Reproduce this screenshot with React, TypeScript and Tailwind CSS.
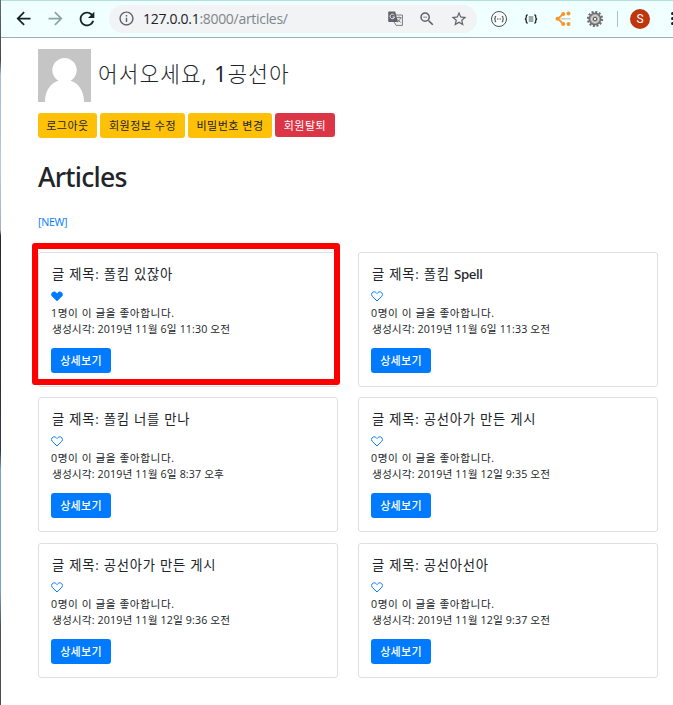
import React from "react";
import { MdArrowBack, MdArrowForward, MdRefresh, MdInfoOutline, MdStarBorder, MdZoomOut } from "react-icons/md";

type Article = { title: string; latin?: string; likes: number; created: string };

const articles: Article[] = [
  { title: "폴킴 있잖아", likes: 1, created: "2019년 11월 6일 11:30 오전" },
  { title: "폴킴 ", latin: "Spell", likes: 0, created: "2019년 11월 6일 11:33 오전" },
  { title: "폴킴 너를 만나", likes: 0, created: "2019년 11월 6일 8:37 오후" },
  { title: "공선아가 만든 게시", likes: 0, created: "2019년 11월 12일 9:35 오전" },
  { title: "공선아가 만든 게시", likes: 0, created: "2019년 11월 12일 9:36 오전" },
  { title: "공선아선아", likes: 0, created: "2019년 11월 12일 9:37 오전" },
];

function TranslateIcon() {
  return (
    <svg width="15" height="15" viewBox="0 0 15 15">
      <path d="M6 4h8.4v10.4H8.2L6 11z" fill="#f1f3f4" stroke="#6b6e72" strokeWidth="0.9" />
      <path d="M8.5 6.6h5M11 5.5v1.1M12.6 6.8c-.6 2-1.8 3.3-3.2 4.3M9.5 8.3c.8 1.4 1.8 2.3 3.2 3" fill="none" stroke="#6b6e72" strokeWidth="0.9" />
      <path d="M1 0.5h6.2L10 11H1a.8.8 0 0 1-.8-.8V1.300A.8.8 0 0 1 1 .5z" fill="#5f6368" />
      <path d="M6.300 4.200A2.300 2.300 0 1 0 6.600 6H4.600" fill="none" stroke="#f1f3f4" strokeWidth="1" />
    </svg>
  );
}

function CircleBracesIcon() {
  return (
    <svg width="18" height="18" viewBox="0 0 18 18" fill="none" stroke="#4a5052">
      <circle cx="9" cy="9" r="7.500" fill="#fafefe" strokeWidth="1" />
      <path d="M6.200 6.200c-1.200 0-1 .6-1 1.500s-.2 1.200-.9 1.300c.7.1.9.5.9 1.300s-.2 1.500 1 1.500M11.800 6.200c1.200 0 1 .6 1 1.500s.2 1.200.9 1.300c-.7.1-.9.5-.9 1.300s.2 1.500-1 1.500" strokeWidth="1.100" />
      <path d="M7 9h4" strokeWidth="1" strokeDasharray="1 .5" />
    </svg>
  );
}

function BracesIcon() {
  return (
    <svg width="14" height="10" viewBox="0 0 14 10" fill="none" stroke="#202829">
      <path d="M3.700 1C2.200 1 2.300 1.700 2.300 3S2 4.800 1 5c1 .2 1.300.7 1.300 2s-.1 2 1.400 2M10.300 1c1.500 0 1.400.7 1.400 2s.3 1.800 1.300 2c-1 .2-1.300.7-1.300 2s.1 2-1.400 2" strokeWidth="1.300" />
      <path d="M4.700 3h4.600M4.700 5h4.600M4.700 7h4.600" strokeWidth="0.8" />
    </svg>
  );
}

function NodesIcon() {
  return (
    <svg width="17" height="16" viewBox="0 0 17 16">
      <path d="M7.500 3.500 3 7.700l4.500 4.700" fill="none" stroke="#fb9427" strokeWidth="1.800" />
      <g fill="#fb9427">
        <circle cx="2.500" cy="7.700" r="2" />
        <circle cx="8.200" cy="3" r="2" />
        <circle cx="8.200" cy="13" r="2" />
        <circle cx="13.500" cy="2.500" r="2" />
        <circle cx="13.500" cy="13" r="2" />
      </g>
      <path d="M5.500 7.800h10" stroke="#c7c4b5" strokeWidth="1.200" />
    </svg>
  );
}

function GearIcon() {
  return (
    <svg width="18" height="18" viewBox="0 0 18 18" fill="none">
      <circle cx="9" cy="9" r="7.100" stroke="#70706f" strokeWidth="2" strokeDasharray="2.100 1.617" />
      <circle cx="9" cy="9" r="5.700" fill="#a9a9a8" stroke="#6d6d6d" strokeWidth="1.500" />
      <circle cx="9" cy="9" r="3.500" stroke="#dedede" strokeWidth="1" />
      <circle cx="9" cy="9" r="1.700" fill="#eee" stroke="#5c5c5c" strokeWidth="1" />
    </svg>
  );
}

function BrowserBar() {
  return (
    <header className="flex h-[38px] items-center border-b border-[#9faeac] bg-[#f0ffff] shadow-[inset_0_1px_0_#b3dfdc]">
      <div className="flex w-[108px] shrink-0 items-center pl-[11.5px] text-[#142528]">
        <MdArrowBack size={21} />
        <MdArrowForward size={21} className="ml-[11px] text-[#8ba5a4]" />
        <MdRefresh size={22} className="ml-[10.5px]" />
      </div>
      <div className="flex h-7 w-[368px] shrink-0 items-center rounded-full bg-[#f1f3f4] pl-[9px] text-[#5f6368]">
        <MdInfoOutline size={17} />
        <span className="ml-[8px] w-[245px] font-['Open_Sans','Noto_Sans',sans-serif] text-[14px] leading-none tracking-[-0.3px] text-[#80868b]">
          <span className="text-[#202124]">127.0.0.1</span>:8000/articles/
        </span>
        <TranslateIcon />
        <MdZoomOut size={18} className="ml-[15px]" />
        <MdStarBorder size={18} className="ml-[14px]" />
      </div>
      <div className="flex shrink-0 items-center pl-[13px]">
        <CircleBracesIcon />
        <span className="ml-[16px]"><BracesIcon /></span>
        <span className="ml-[17px]"><NodesIcon /></span>
        <span className="ml-[14px]"><GearIcon /></span>
        <span className="ml-[13px] h-4 w-px bg-[#b1bebd]" />
        <span className="ml-[12px] flex size-5 items-center justify-center rounded-full bg-[#bf360c] font-[Roboto,sans-serif] text-[12px] leading-none text-white">S</span>
        <span className="ml-[21px] flex w-[3px] shrink-0 flex-col gap-[2px]">
          <i className="size-[3px] rounded-full bg-[#142528]" />
          <i className="size-[3px] rounded-full bg-[#142528]" />
          <i className="size-[3px] rounded-full bg-[#142528]" />
        </span>
      </div>
    </header>
  );
}

function Profile() {
  return (
    <svg width="53" height="53" viewBox="0 0 53 53">
      <path d="M0 0h53v53H0z" fill="#c5c5c5" />
      <path d="M7 53C7 41 13 34 20.500 31.800A12.200 12.200 0 1 1 32.500 31.800C40 34 46 41 46 53z" fill="#fff" />
    </svg>
  );
}

function Heart({ filled }: { filled: boolean }) {
  return (
    <svg width="12" height="11" viewBox="0 0 12 11" className="block">
      <path
        d="M6 10 1.300 5.400A2.700 2.700 0 0 1 1.400 1.500C2.500.5 4.200.6 5.200 1.700L6 2.500l.8-.8c1-1.100 2.700-1.200 3.800-.2a2.700 2.700 0 0 1 .1 3.900z"
        fill={filled ? "#007bff" : "none"}
        stroke="#007bff"
        strokeWidth={filled ? 0.6 : 1}
        strokeLinejoin="round"
      />
    </svg>
  );
}

function Card({ article }: { article: Article }) {
  return (
    <article className="h-[135px] rounded-[3px] border border-[#dfdfdf] bg-white pl-[12px] pt-[12px]">
      <h5 className="h-[18px] whitespace-nowrap pl-px text-[13.33px] leading-[18px] tracking-[0.75px]">
        글 제목: {article.title}
        {article.latin && <span className="font-['Noto_Sans',sans-serif] font-medium tracking-[-0.4px]">{article.latin}</span>}
      </h5>
      <div className="flex h-[22px] items-center pt-[5px]"><Heart filled={article.likes > 0} /></div>
      <p className="h-4 whitespace-nowrap leading-4 tracking-[0.56px]">{article.likes}명이 이 글을 좋아합니다.</p>
      <p className="h-4 whitespace-nowrap pl-px leading-4 tracking-[0.13px]">생성시각: {article.created}</p>
      <button className="mt-[11px] flex h-[25px] w-[60px] items-center justify-center rounded-[3px] bg-[#007bff] pt-px text-[11px] font-medium tracking-[0.3px] text-white">상세보기</button>
    </article>
  );
}

export default function App() {
  return (
    <div className="flex h-[705px] w-[673px] overflow-hidden bg-white">
      <div className="w-px shrink-0 bg-[linear-gradient(#65696d_0,#43484e_60px,#a3bbd6_75px,#b5c9df_170px,#aaaeb7_230px,#252a35_236px,#303642_450px,#7ea1c7_470px,#7ea1c7_590px,#4d5655_625px,#454c49_705px)]" />
      <div className="min-w-0 flex-1">
        <BrowserBar />
        <main className="pl-[37px] pt-[11px] font-['Open_Sans','Noto_Sans_CJK_KR',sans-serif] text-[10.67px] text-[#212529]">
          <div className="flex items-center">
            <Profile />
            <h3 className="mb-[4px] ml-[7px] whitespace-nowrap font-['Noto_Sans','Noto_Sans_CJK_KR',sans-serif] text-[21.33px] font-light leading-[26px] tracking-[1.1px]">어서오세요, <span className="font-normal">1</span>공선아</h3>
          </div>
          <div className="mt-[11px] flex items-start gap-[3px] text-[11px] tracking-[0.5px]">
            <button className="h-[25px] w-[59px] whitespace-nowrap rounded-[3px] bg-[#ffc107] pt-px">로그아웃</button>
            <button className="h-[25px] w-[85px] whitespace-nowrap rounded-[3px] bg-[#ffc107] pt-px">회원정보 수정</button>
            <button className="h-[25px] w-[84px] whitespace-nowrap rounded-[3px] bg-[#ffc107] pt-px">비밀번호 변경</button>
            <button className="h-[24px] w-[60px] whitespace-nowrap rounded-[3px] bg-[#dc3545] pt-[3px] text-white">회원탈퇴</button>
          </div>
          <h1 className="mt-[23px] font-['Noto_Sans','Open_Sans',sans-serif] text-[26.67px] font-medium leading-8 tracking-[-0.75px]">Articles</h1>
          <a className="mt-[21px] block h-4 leading-4 tracking-[-0.3px] text-[#007bff]">[NEW]</a>
          <section className="mt-[22px] grid w-[620px] grid-cols-2 gap-x-5 gap-y-[10.4px]">
            {articles.map((article, index) => (
              <div key={index} className="relative">
                <Card article={article} />
                {index === 0 && <div className="pointer-events-none absolute left-[-6px] top-[-9px] h-[142px] w-[308px] rounded-[3px] border-[6px] border-[#ff0000]" />}
              </div>
            ))}
          </section>
        </main>
      </div>
    </div>
  );
}
